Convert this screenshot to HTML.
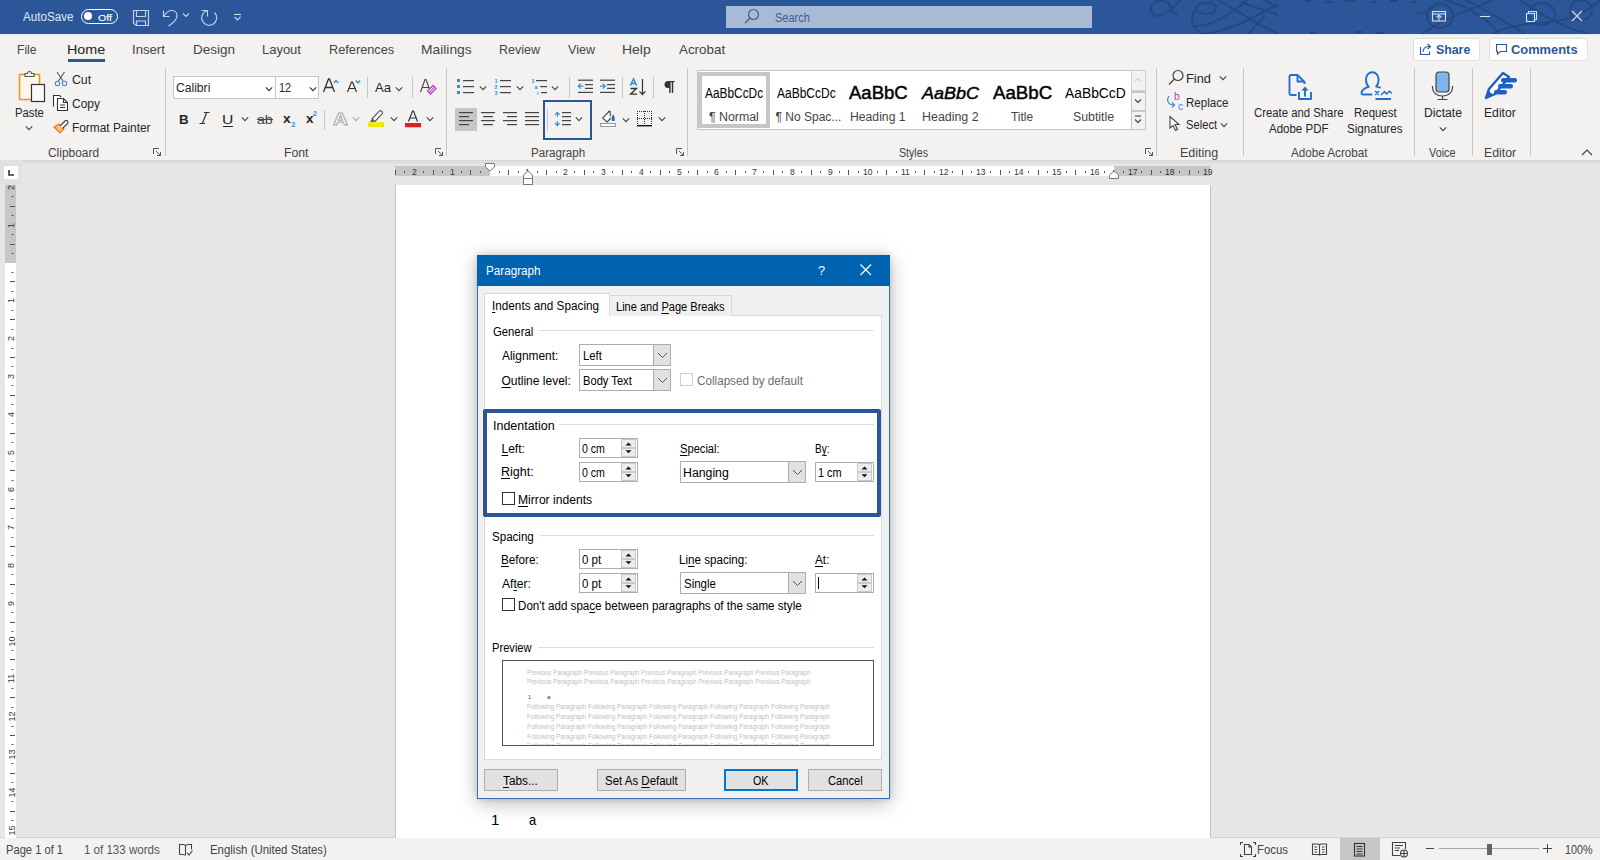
<!DOCTYPE html>
<html><head><meta charset="utf-8"><style>
html,body{margin:0;padding:0;width:1600px;height:860px;overflow:hidden;background:#e6e6e6;font-family:"Liberation Sans",sans-serif}
.r,.t,.s{position:absolute}
.t{white-space:nowrap;line-height:1;transform-origin:0 0}
u{text-decoration:underline;text-underline-offset:1.5px}
</style></head><body>
<div class="r" style="left:0px;top:0px;width:1600px;height:34px;background:#2b579a"></div>
<div class="r" style="left:0px;top:34px;width:1600px;height:126px;background:#f3f2f1"></div>
<div class="r" style="left:0px;top:160px;width:1600px;height:678px;background:#e6e6e6"></div>
<div class="r" style="left:0px;top:838px;width:1600px;height:22px;background:#f3f2f1"></div>
<div class="r" style="left:0px;top:837px;width:1600px;height:1px;background:#d4d4d4"></div>
<div class="r" style="left:0px;top:160px;width:1600px;height:1px;background:#d8d6d4"></div>
<div class="r" style="left:0px;top:161px;width:1600px;height:4px;background:linear-gradient(#dcdcdc,#e6e6e6)"></div>
<svg class="s" style="left:1140px;top:0px;" width="460" height="34" viewBox="0 0 460 34"><g fill="none" stroke="#24487f" stroke-width="2" opacity="0.9">
<path d="M40,0 C34,8 29,11 24,14 C17,18 11,15 11,9 C11,3 16,0.5 21,0.5 C27,0.5 31,4 31,9 C31,12 34,13 38,14"/>
<path d="M76,8 C76,4 71,3 67,3 C60,3 56,6 56,9 C56,12 61,14 67,14 C72,14 76,12 76,8 Z"/>
<path d="M56,9 C51,14 51,22 54,27 C57,31 62,34 66,34"/>
<path d="M55,26 C72,26 92,14 107,0"/>
<path d="M62,34 C90,32 118,15 138,4"/>
<path d="M78,0 C92,8 110,20 138,34"/>
<path d="M100,2 L138,15 M108,34 L125,16 M125,0 L137,8"/>
<path d="M165,1 h6 M185,2 h8 M205,1 h10 M230,2 h6 M250,1 h8 M270,2 h6"/>
<path d="M170,33 h6 M215,32 h8 M235,33 h10"/>
<ellipse cx="300" cy="16" rx="13" ry="12"/>
<path d="M275,13 C285,14 292,10 298,2"/>
<path d="M305,0 C330,6 350,22 360,34"/>
<path d="M325,0 C348,10 368,24 385,34"/>
<ellipse cx="402" cy="14" rx="13" ry="11"/>
<path d="M352,34 C380,20 410,25 430,18 C445,12 455,5 460,0"/>
<ellipse cx="441" cy="10" rx="11" ry="10"/>
<path d="M282,34 C300,20 330,10 352,0"/>
<path d="M380,0 C395,10 420,28 450,34"/>
</g></svg>
<div class="t" style="left:22.98px;top:11.42px;font-size:12.5px;color:#ffffff;transform:scaleX(0.9324);opacity:.85">AutoSave</div>
<div class="r" style="left:80.5px;top:8.5px;width:37px;height:15.5px;border:1.6px solid #fff;border-radius:8px;box-sizing:border-box"></div>
<div class="r" style="left:84px;top:12px;width:8px;height:8px;background:#fff;border-radius:50%"></div>
<div class="t" style="left:98.10px;top:12.66px;font-size:9.5px;color:#ffffff;transform:scaleX(1.1111);-webkit-text-stroke:0.15px #fff;">Off</div>
<svg class="s" style="left:132px;top:9px;" width="18" height="18" viewBox="0 0 18 18"><g fill="none" stroke="#c5d3ea" stroke-width="1.15">
<path d="M1.5,1.5 H16.5 V16.5 H4 L1.5,14 Z"/><path d="M4.5,1.5 V7.5 H13.5 V1.5"/><path d="M4.5,16.5 V12 H13.5 V16.5"/></g></svg>
<svg class="s" style="left:160px;top:8px;" width="20" height="20" viewBox="0 0 20 20"><g fill="none" stroke="#c5d3ea" stroke-width="1.15">
<path d="M3.5,2.5 V8.5 H9.5"/><path d="M4,8 C6,4.5 8.5,2.5 12,2.5 C15.5,2.5 17,5.5 17,8 C17,11 14,14.5 8.5,18"/></g></svg>
<svg class="s" style="left:182px;top:12px;" width="8" height="6" viewBox="0 0 8 6"><path d="M1,1.5 L4,4.5 L7,1.5" fill="none" stroke="#c5d3ea" stroke-width="1.1"/></svg>
<svg class="s" style="left:199px;top:8px;" width="20" height="20" viewBox="0 0 20 20"><g fill="none" stroke="#c5d3ea" stroke-width="1.15">
<path d="M8.5,2.5 A7.5,7.5 0 1 0 15.5,4.5"/><path d="M2.5,2.5 H8.5 V8.5"/></g></svg>
<svg class="s" style="left:232px;top:12px;" width="10" height="10" viewBox="0 0 10 10"><g fill="none" stroke="#c9d6ea" stroke-width="1.1"><path d="M2,2.5 H9"/><path d="M2.5,5 L5.5,8 L8.5,5"/></g></svg>
<div class="r" style="left:726px;top:6px;width:366px;height:22px;background:#a9bad5"></div>
<svg class="s" style="left:743px;top:8px;" width="18" height="18" viewBox="0 0 18 18"><g fill="none" stroke="#3b5d92" stroke-width="1.2"><circle cx="10.5" cy="6.5" r="5"/><path d="M7,10 L2,15"/></g></svg>
<div class="t" style="left:775.10px;top:11.64px;font-size:12px;color:#3b5d92;transform:scaleX(0.9183);">Search</div>
<svg class="s" style="left:1430px;top:9px;" width="18" height="14" viewBox="0 0 18 14"><g fill="none" stroke="#d5def0" stroke-width="1.1"><rect x="2.5" y="2.5" width="13" height="9.5"/><path d="M2.5,5 H15.5"/><path d="M9,11.5 V6.5 M6.5,8.5 L9,6 L11.5,8.5"/></g></svg>
<div class="r" style="left:1480px;top:16px;width:10px;height:1px;background:#d5def0"></div>
<svg class="s" style="left:1524px;top:10px;" width="14" height="14" viewBox="0 0 14 14"><g fill="none" stroke="#d5def0" stroke-width="1.1"><rect x="2.5" y="3.5" width="8" height="8"/><path d="M4.5,3.5 V1.5 H12.5 V9.5 H10.5"/></g></svg>
<svg class="s" style="left:1570px;top:9px;" width="14" height="14" viewBox="0 0 14 14"><g fill="none" stroke="#d5def0" stroke-width="1.1"><path d="M2,2 L12,12 M12,2 L2,12"/></g></svg>
<div class="r" style="left:0px;top:34px;width:1600px;height:1px;background:#e6ecf5"></div>
<div class="t" style="left:16.51px;top:42.99px;font-size:13px;color:#444444;transform:scaleX(0.9324);">File</div>
<div class="t" style="left:67.32px;top:42.99px;font-size:13px;color:#262626;transform:scaleX(1.1049);">Home</div>
<div class="t" style="left:132.09px;top:42.99px;font-size:13px;color:#444444;transform:scaleX(1.0090);">Insert</div>
<div class="t" style="left:192.90px;top:42.99px;font-size:13px;color:#444444;transform:scaleX(1.0348);">Design</div>
<div class="t" style="left:261.93px;top:42.99px;font-size:13px;color:#444444;">Layout</div>
<div class="t" style="left:328.96px;top:42.99px;font-size:13px;color:#444444;transform:scaleX(0.9793);">References</div>
<div class="t" style="left:420.87px;top:42.99px;font-size:13px;color:#444444;transform:scaleX(1.0618);">Mailings</div>
<div class="t" style="left:498.97px;top:42.99px;font-size:13px;color:#444444;transform:scaleX(0.9617);">Review</div>
<div class="t" style="left:567.94px;top:42.99px;font-size:13px;color:#444444;transform:scaleX(0.9671);">View</div>
<div class="t" style="left:621.85px;top:42.99px;font-size:13px;color:#444444;transform:scaleX(1.0746);">Help</div>
<div class="t" style="left:678.97px;top:42.99px;font-size:13px;color:#444444;transform:scaleX(1.0295);">Acrobat</div>
<div class="r" style="left:68px;top:59px;width:37px;height:3px;background:#2b579a"></div>
<div class="r" style="left:1412.5px;top:37.5px;width:67px;height:23px;background:#fff;border:1px solid #e1dfdd;border-radius:3px;box-sizing:border-box"></div>
<div class="r" style="left:1488.5px;top:37.5px;width:99px;height:23px;background:#fff;border:1px solid #e1dfdd;border-radius:3px;box-sizing:border-box"></div>
<svg class="s" style="left:1418px;top:42px;" width="15" height="14" viewBox="0 0 15 14"><g fill="none" stroke="#2b579a" stroke-width="1.1"><path d="M2.5,5 V12.5 H11.5 V9.5"/><path d="M5,10 C5,6 8,4.5 11.5,4.5"/><path d="M9.5,2 L12.5,4.5 L9.5,7"/></g></svg>
<div class="t" style="left:1435.89px;top:42.89px;font-size:13px;color:#2b579a;font-weight:700;transform:scaleX(0.9487);">Share</div>
<svg class="s" style="left:1495px;top:43px;" width="14" height="13" viewBox="0 0 14 13"><g fill="none" stroke="#2b579a" stroke-width="1.1"><path d="M1.5,1.5 H11.5 V8.5 H5.5 L2.5,11 V8.5 H1.5 Z"/></g></svg>
<div class="t" style="left:1511.47px;top:42.89px;font-size:13px;color:#2b579a;font-weight:700;transform:scaleX(0.9907);">Comments</div>
<svg class="s" style="left:16px;top:70px;" width="32" height="33" viewBox="0 0 32 33"><g>
<rect x="3.5" y="4.5" width="20" height="25" fill="#fdf6e9" stroke="#e39b2c" stroke-width="1.6"/>
<path d="M9,6.5 V3.5 H11.5 A2,2 0 0 1 15.5,3.5 H18 V6.5 Z" fill="#f3f2f1" stroke="#555" stroke-width="1.1"/>
<rect x="15.5" y="14.5" width="13" height="17" fill="#fafafa" stroke="#333" stroke-width="1.2"/>
</g></svg>
<div class="t" style="left:14.68px;top:107.22px;font-size:12.5px;color:#262626;transform:scaleX(0.9018);">Paste</div>
<svg class="s" style="left:23.5px;top:124px;" width="10" height="8" viewBox="0 0 10 8"><path d="M1.8,2.4 L5,5.6 L8.2,2.4" fill="none" stroke="#444" stroke-width="1.1"/></svg>
<svg class="s" style="left:54px;top:71px;" width="14" height="16" viewBox="0 0 14 16"><g fill="none" stroke-width="1.1">
<path d="M3,1 L9,10 M10.5,1 L4.5,10" stroke="#555"/>
<circle cx="3.5" cy="12.5" r="2.2" stroke="#2e8fd6"/><circle cx="10.5" cy="12.5" r="2.2" stroke="#2e8fd6"/></g></svg>
<div class="t" style="left:71.98px;top:74.22px;font-size:12.5px;color:#262626;transform:scaleX(0.9826);">Cut</div>
<svg class="s" style="left:52px;top:94px;" width="19" height="18" viewBox="0 0 19 18"><g fill="#fff" stroke="#333" stroke-width="1.1">
<path d="M1.5,12.5 V1.5 H7.5 L9,3"/>
<path d="M5.5,4.5 H11.5 L15.5,8.5 V16.5 H5.5 Z"/><path d="M11.5,4.5 V8.5 H15.5" fill="none"/>
<path d="M8,11 H13 M8,13.5 H13" fill="none"/></g></svg>
<div class="t" style="left:71.99px;top:98.02px;font-size:12.5px;color:#262626;transform:scaleX(0.9606);">Copy</div>
<svg class="s" style="left:52px;top:118px;" width="19" height="17" viewBox="0 0 19 17"><g>
<path d="M2,9 L8,15 L12,11 L7,6 Z" fill="#f6c36b" stroke="#e07b1a" stroke-width="1.2"/>
<path d="M8,8 L13,3 A1.6,1.6 0 0 1 15.5,5.5 L10.5,10.5" fill="#fff" stroke="#444" stroke-width="1.1"/>
</g></svg>
<div class="t" style="left:71.63px;top:121.82px;font-size:12.5px;color:#262626;transform:scaleX(0.9504);">Format Painter</div>
<div class="t" style="left:47.99px;top:146.64px;font-size:12px;color:#444444;transform:scaleX(0.9943);">Clipboard</div>
<svg class="s" style="left:152.5px;top:148.0px;" width="9" height="9" viewBox="0 0 9 9"><g fill="none" stroke="#555" stroke-width="1"><path d="M0.5,6 V0.5 H6"/><path d="M3,3 L7.5,7.5 M7.5,4 V7.5 H4"/></g></svg>
<div class="r" style="left:165px;top:68px;width:1px;height:88px;background:#c8c6c4"></div>
<div class="r" style="left:173px;top:76px;width:103px;height:23px;background:#fff;border:1px solid #c8c6c4;box-sizing:border-box"></div>
<div class="r" style="left:275px;top:76px;width:44px;height:23px;background:#fff;border:1px solid #c8c6c4;box-sizing:border-box"></div>
<div class="t" style="left:175.98px;top:82.02px;font-size:12.5px;color:#262626;transform:scaleX(0.9691);">Calibri</div>
<svg class="s" style="left:264.2px;top:84.5px;" width="10" height="8" viewBox="0 0 10 8"><path d="M1.8,2.4 L5,5.6 L8.2,2.4" fill="none" stroke="#333" stroke-width="1.1"/></svg>
<div class="t" style="left:279.07px;top:82.02px;font-size:12.5px;color:#262626;transform:scaleX(0.8683);">12</div>
<svg class="s" style="left:307.5px;top:84.5px;" width="10" height="8" viewBox="0 0 10 8"><path d="M1.8,2.4 L5,5.6 L8.2,2.4" fill="none" stroke="#333" stroke-width="1.1"/></svg>
<svg class="s" style="left:321px;top:77px;" width="40" height="17" viewBox="0 0 40 17"><path d="M2.5,15 L7.5,2 H8.5 L13.5,15 M4.5,10.5 H11.5" fill="none" stroke="#333" stroke-width="1.3"/>
<path d="M26.5,15 L30.5,5 H31.5 L35.5,15 M28,11.5 H34" fill="none" stroke="#333" stroke-width="1.2"/>
<path d="M12.8,6 L15,3.5 L17.2,6" fill="none" stroke="#2e8fd6" stroke-width="1.2"/>
<path d="M34.8,3.5 L37,6 L39.2,3.5" fill="none" stroke="#2e8fd6" stroke-width="1.2"/></svg>
<div class="r" style="left:367px;top:77px;width:1px;height:21px;background:#c8c6c4"></div>
<div class="t" style="left:375.47px;top:81.37px;font-size:13.5px;color:#262626;transform:scaleX(0.9705);">Aa</div>
<svg class="s" style="left:393.5px;top:84.5px;" width="10" height="8" viewBox="0 0 10 8"><path d="M1.8,2.4 L5,5.6 L8.2,2.4" fill="none" stroke="#444" stroke-width="1.1"/></svg>
<div class="r" style="left:412px;top:77px;width:1px;height:21px;background:#c8c6c4"></div>
<svg class="s" style="left:419px;top:78px;" width="19" height="17" viewBox="0 0 19 17"><g><path d="M1.5,14 L6,1.5 H7 L11.5,14 M3.3,9.5 H9.7" fill="none" stroke="#444" stroke-width="1.1"/>
<path d="M8.5,13 L14,7.5 L17,10.5 L11.5,16 Z" fill="#fff" stroke="#b146c2" stroke-width="1.3"/>
<path d="M10.2,14.7 L15.5,9.2" fill="none" stroke="#b146c2" stroke-width="1.1"/></g></svg>
<div class="t" style="left:179.21px;top:113.29px;font-size:13px;color:#262626;font-weight:700;transform:scaleX(1.0216);">B</div>
<svg class="s" style="left:198px;top:111px;" width="13" height="14" viewBox="0 0 13 14"><g fill="none" stroke="#333" stroke-width="1.2"><path d="M6,1.5 H11.5 M1.5,12.5 H7 M8.7,1.5 L4.3,12.5"/></g></svg>
<div class="t" style="left:221.69px;top:113.29px;font-size:13px;color:#262626;transform:scaleX(1.2055);">U</div>
<div class="r" style="left:222.5px;top:125.5px;width:10px;height:1px;background:#262626"></div>
<svg class="s" style="left:240.2px;top:115px;" width="10" height="8" viewBox="0 0 10 8"><path d="M1.8,2.4 L5,5.6 L8.2,2.4" fill="none" stroke="#444" stroke-width="1.1"/></svg>
<div class="t" style="left:256.90px;top:113.92px;font-size:12.5px;color:#444;transform:scaleX(1.1285);">ab</div>
<div class="r" style="left:256.5px;top:118.5px;width:16px;height:1px;background:#444"></div>
<div class="t" style="left:283.41px;top:112.49px;font-size:13px;color:#262626;font-weight:700;transform:scaleX(1.0644);">x</div>
<div class="t" style="left:291.24px;top:121.15px;font-size:7.5px;color:#2e8fd6;font-weight:700;">2</div>
<div class="t" style="left:305.61px;top:112.49px;font-size:13px;color:#262626;font-weight:700;transform:scaleX(1.0360);">x</div>
<div class="t" style="left:312.74px;top:109.65px;font-size:7.5px;color:#2e8fd6;font-weight:700;">2</div>
<div class="r" style="left:324px;top:110px;width:1px;height:20px;background:#c8c6c4"></div>
<div class="t" style="left:333.26px;top:111.11px;font-size:17px;color:#fff;transform:scaleX(1.2153);-webkit-text-stroke:1px #aaa;font-weight:700;">A</div>
<svg class="s" style="left:350.6px;top:115px;" width="10" height="8" viewBox="0 0 10 8"><path d="M1.8,2.4 L5,5.6 L8.2,2.4" fill="none" stroke="#aaa" stroke-width="1.1"/></svg>
<svg class="s" style="left:367px;top:109px;" width="19" height="19" viewBox="0 0 19 19"><path d="M5,10 L12,2.5 A1.7,1.7 0 0 1 15,5 L8,12.5 Z" fill="#fff" stroke="#555" stroke-width="1.1"/>
<path d="M5,10 L8,12.5 L5.5,13 L3,13 Z" fill="#555"/>
<rect x="1" y="13.2" width="16" height="4.8" fill="#f2e700"/></svg>
<svg class="s" style="left:388.5px;top:115px;" width="10" height="8" viewBox="0 0 10 8"><path d="M1.8,2.4 L5,5.6 L8.2,2.4" fill="none" stroke="#444" stroke-width="1.1"/></svg>
<svg class="s" style="left:404px;top:109px;" width="18" height="19" viewBox="0 0 18 19"><path d="M4.5,12.5 L8.5,2 H9.5 L13.5,12.5 M6,9 H12" fill="none" stroke="#333" stroke-width="1.2"/><rect x="1" y="14" width="16" height="4.3" fill="#e01f1f"/></svg>
<svg class="s" style="left:425.4px;top:115px;" width="10" height="8" viewBox="0 0 10 8"><path d="M1.8,2.4 L5,5.6 L8.2,2.4" fill="none" stroke="#444" stroke-width="1.1"/></svg>
<div class="t" style="left:284.00px;top:146.64px;font-size:12px;color:#444444;transform:scaleX(1.0201);">Font</div>
<svg class="s" style="left:434.5px;top:148.0px;" width="9" height="9" viewBox="0 0 9 9"><g fill="none" stroke="#555" stroke-width="1"><path d="M0.5,6 V0.5 H6"/><path d="M3,3 L7.5,7.5 M7.5,4 V7.5 H4"/></g></svg>
<div class="r" style="left:446px;top:68px;width:1px;height:88px;background:#c8c6c4"></div>
<svg class="s" style="left:456px;top:78px;" width="19" height="17" viewBox="0 0 19 17"><g><rect x="1" y="1" width="3" height="3" fill="#2e8fd6"/><rect x="1" y="7" width="3" height="3" fill="#2e8fd6"/><rect x="1" y="13" width="3" height="3" fill="#2e8fd6"/>
<rect x="7" y="2" width="11" height="1.2" fill="#444"/><rect x="7" y="8" width="11" height="1.2" fill="#444"/><rect x="7" y="14" width="11" height="1.2" fill="#444"/></g></svg>
<svg class="s" style="left:478px;top:83.5px;" width="10" height="8" viewBox="0 0 10 8"><path d="M1.8,2.4 L5,5.6 L8.2,2.4" fill="none" stroke="#444" stroke-width="1.1"/></svg>
<svg class="s" style="left:494px;top:78px;" width="19" height="17" viewBox="0 0 19 17"><g font-family="Liberation Sans" font-size="5.5" fill="#2e8fd6" font-weight="700"><text x="0.5" y="5">1</text><text x="0.5" y="11">2</text><text x="0.5" y="17">3</text></g>
<g fill="#444"><rect x="6" y="2" width="11" height="1.2"/><rect x="6" y="8" width="11" height="1.2"/><rect x="6" y="14" width="11" height="1.2"/></g></svg>
<svg class="s" style="left:515px;top:83.5px;" width="10" height="8" viewBox="0 0 10 8"><path d="M1.8,2.4 L5,5.6 L8.2,2.4" fill="none" stroke="#444" stroke-width="1.1"/></svg>
<svg class="s" style="left:531px;top:78px;" width="19" height="17" viewBox="0 0 19 17"><g font-family="Liberation Sans" font-size="5.5" fill="#2e8fd6" font-weight="700"><text x="0.5" y="5">1</text><text x="3.5" y="11">a</text><text x="6" y="17">i</text></g>
<g fill="#444"><rect x="5" y="2" width="11" height="1.2"/><rect x="9" y="8" width="7" height="1.2"/><rect x="10" y="14" width="6" height="1.2"/></g></svg>
<svg class="s" style="left:550px;top:83.5px;" width="10" height="8" viewBox="0 0 10 8"><path d="M1.8,2.4 L5,5.6 L8.2,2.4" fill="none" stroke="#444" stroke-width="1.1"/></svg>
<div class="r" style="left:569px;top:77px;width:1px;height:21px;background:#c8c6c4"></div>
<svg class="s" style="left:577px;top:78px;" width="18" height="17" viewBox="0 0 18 17"><g fill="#444"><rect x="1" y="1.6" width="15" height="1.2"/><rect x="8" y="6" width="8" height="1.2"/><rect x="8" y="9.8" width="8" height="1.2"/><rect x="1" y="13.8" width="15" height="1.2"/></g>
<path d="M6.5,8.2 H1.5 M3.8,5.7 L1.3,8.2 L3.8,10.7" fill="none" stroke="#2e8fd6" stroke-width="1.2"/></svg>
<svg class="s" style="left:599px;top:78px;" width="18" height="17" viewBox="0 0 18 17"><g fill="#444"><rect x="1" y="1.6" width="15" height="1.2"/><rect x="8" y="6" width="8" height="1.2"/><rect x="8" y="9.8" width="8" height="1.2"/><rect x="1" y="13.8" width="15" height="1.2"/></g>
<path d="M1,8.2 H6 M3.7,5.7 L6.2,8.2 L3.7,10.7" fill="none" stroke="#2e8fd6" stroke-width="1.2"/></svg>
<div class="r" style="left:622px;top:77px;width:1px;height:21px;background:#c8c6c4"></div>
<svg class="s" style="left:628px;top:77px;" width="20" height="20" viewBox="0 0 20 20"><path d="M2.3,8.7 L5.5,2 L8.7,8.7 M3.5,6.5 H7.5" fill="none" stroke="#2e8fd6" stroke-width="1.5"/>
<path d="M2.5,11.5 H8.5 L2.5,17.2 H9" fill="none" stroke="#333" stroke-width="1.3"/>
<path d="M14.5,2 V17.5 M11.5,14.3 L14.5,17.5 L17.5,14.3" fill="none" stroke="#333" stroke-width="1.2"/></svg>
<div class="r" style="left:653px;top:77px;width:1px;height:21px;background:#c8c6c4"></div>
<svg class="s" style="left:662px;top:80px;" width="14" height="14" viewBox="0 0 14 14"><path d="M6,1 H12.5 V2.3 H11.2 V13 H9.8 V2.3 H8.6 V13 H7.2 V8 H6 A3.5,3.5 0 0 1 6,1 Z" fill="#333"/></svg>
<div class="r" style="left:455px;top:108px;width:22px;height:23px;background:#c8c6c4"></div>
<svg class="s" style="left:459px;top:112px;" width="15" height="14" viewBox="0 0 15 14"><rect x="0" y="0" width="14" height="1.2" fill="#444"/><rect x="0" y="4" width="10" height="1.2" fill="#444"/><rect x="0" y="8" width="14" height="1.2" fill="#444"/><rect x="0" y="12" width="10" height="1.2" fill="#444"/></svg>
<svg class="s" style="left:481px;top:112px;" width="15" height="14" viewBox="0 0 15 14"><rect x="0" y="0" width="14" height="1.2" fill="#444"/><rect x="2" y="4" width="10" height="1.2" fill="#444"/><rect x="0" y="8" width="14" height="1.2" fill="#444"/><rect x="2" y="12" width="10" height="1.2" fill="#444"/></svg>
<svg class="s" style="left:503px;top:112px;" width="15" height="14" viewBox="0 0 15 14"><rect x="0" y="0" width="14" height="1.2" fill="#444"/><rect x="4" y="4" width="10" height="1.2" fill="#444"/><rect x="0" y="8" width="14" height="1.2" fill="#444"/><rect x="4" y="12" width="10" height="1.2" fill="#444"/></svg>
<svg class="s" style="left:525px;top:112px;" width="15" height="14" viewBox="0 0 15 14"><rect x="0" y="0" width="14" height="1.2" fill="#444"/><rect x="0" y="4" width="14" height="1.2" fill="#444"/><rect x="0" y="8" width="14" height="1.2" fill="#444"/><rect x="0" y="12" width="14" height="1.2" fill="#444"/></svg>
<div class="r" style="left:543px;top:100px;width:49px;height:39.5px;border:2px solid #2b579a;box-sizing:border-box"></div>
<div class="r" style="left:547px;top:109px;width:1px;height:22px;background:#c8c6c4"></div>
<svg class="s" style="left:552px;top:111px;" width="20" height="16" viewBox="0 0 20 16"><g fill="#444"><rect x="10" y="1" width="9" height="1.2"/><rect x="10" y="5" width="9" height="1.2"/><rect x="10" y="9" width="9" height="1.2"/><rect x="10" y="13" width="9" height="1.2"/></g>
<path d="M5.3,1.5 V6 M3,3.8 L5.3,1.3 L7.6,3.8 M5.3,10 V14.5 M3,12.2 L5.3,14.7 L7.6,12.2" fill="none" stroke="#2e8fd6" stroke-width="1.2"/></svg>
<svg class="s" style="left:573.5px;top:115px;" width="10" height="8" viewBox="0 0 10 8"><path d="M1.8,2.4 L5,5.6 L8.2,2.4" fill="none" stroke="#444" stroke-width="1.1"/></svg>
<svg class="s" style="left:599px;top:109px;" width="19" height="19" viewBox="0 0 19 19"><path d="M10.2,2.5 L3.7,8.8 L8,13 L12,9" fill="#fff" stroke="#444" stroke-width="1.1" stroke-linejoin="round"/>
<path d="M9.6,3 C10,1.8 11,1.8 11.2,3 V7.5" fill="none" stroke="#444" stroke-width="1.1"/>
<path d="M13,12 C12.6,9.5 12.8,6.5 14,5.5 C15.3,6 16,9 15.6,12 Z" fill="#1f6db5"/>
<rect x="1.5" y="14.5" width="15" height="3" fill="#fff" stroke="#999" stroke-width="1"/></svg>
<svg class="s" style="left:620.5px;top:115.5px;" width="10" height="8" viewBox="0 0 10 8"><path d="M1.8,2.4 L5,5.6 L8.2,2.4" fill="none" stroke="#444" stroke-width="1.1"/></svg>
<svg class="s" style="left:636px;top:111px;" width="17" height="16" viewBox="0 0 17 16"><g fill="#333"><rect x="1" y="0" width="1" height="1"/><rect x="1" y="7" width="1" height="1"/><rect x="3" y="0" width="1" height="1"/><rect x="3" y="7" width="1" height="1"/><rect x="5" y="0" width="1" height="1"/><rect x="5" y="7" width="1" height="1"/><rect x="7" y="0" width="1" height="1"/><rect x="7" y="7" width="1" height="1"/><rect x="9" y="0" width="1" height="1"/><rect x="9" y="7" width="1" height="1"/><rect x="11" y="0" width="1" height="1"/><rect x="11" y="7" width="1" height="1"/><rect x="13" y="0" width="1" height="1"/><rect x="13" y="7" width="1" height="1"/><rect x="15" y="0" width="1" height="1"/><rect x="15" y="7" width="1" height="1"/><rect x="1" y="0" width="1" height="1"/><rect x="15" y="0" width="1" height="1"/><rect x="8" y="0" width="1" height="1"/><rect x="1" y="2" width="1" height="1"/><rect x="15" y="2" width="1" height="1"/><rect x="8" y="2" width="1" height="1"/><rect x="1" y="4" width="1" height="1"/><rect x="15" y="4" width="1" height="1"/><rect x="8" y="4" width="1" height="1"/><rect x="1" y="6" width="1" height="1"/><rect x="15" y="6" width="1" height="1"/><rect x="8" y="6" width="1" height="1"/><rect x="1" y="8" width="1" height="1"/><rect x="15" y="8" width="1" height="1"/><rect x="8" y="8" width="1" height="1"/><rect x="1" y="10" width="1" height="1"/><rect x="15" y="10" width="1" height="1"/><rect x="8" y="10" width="1" height="1"/><rect x="1" y="12" width="1" height="1"/><rect x="15" y="12" width="1" height="1"/><rect x="8" y="12" width="1" height="1"/></g><rect x="1" y="14" width="15" height="1.4" fill="#111"/></svg>
<svg class="s" style="left:657px;top:115px;" width="10" height="8" viewBox="0 0 10 8"><path d="M1.8,2.4 L5,5.6 L8.2,2.4" fill="none" stroke="#444" stroke-width="1.1"/></svg>
<div class="t" style="left:531.05px;top:146.64px;font-size:12px;color:#444444;transform:scaleX(0.9654);">Paragraph</div>
<svg class="s" style="left:676px;top:148.0px;" width="9" height="9" viewBox="0 0 9 9"><g fill="none" stroke="#555" stroke-width="1"><path d="M0.5,6 V0.5 H6"/><path d="M3,3 L7.5,7.5 M7.5,4 V7.5 H4"/></g></svg>
<div class="r" style="left:687px;top:68px;width:1px;height:88px;background:#c8c6c4"></div>
<div class="r" style="left:697px;top:70px;width:449px;height:60px;background:#fff;border:1px solid #c8c6c4;box-sizing:border-box"></div>
<div class="r" style="left:698px;top:72px;width:72px;height:56px;border:4px solid #c8c6c4;box-sizing:border-box;background:#fff"></div>
<div class="t" style="left:704.78px;top:86.35px;font-size:14px;color:#000;transform:scaleX(0.8491);">AaBbCcDc</div>
<div class="t" style="left:709.02px;top:111.24px;font-size:12px;color:#444;transform:scaleX(1.0279);">&para; Normal</div>
<div class="t" style="left:776.68px;top:86.35px;font-size:14px;color:#000;transform:scaleX(0.8564);">AaBbCcDc</div>
<div class="t" style="left:775.53px;top:111.24px;font-size:12px;color:#444;">&para; No Spac...</div>
<div class="t" style="left:848.96px;top:84.16px;font-size:18px;color:#000;transform:scaleX(1.0299);-webkit-text-stroke:0.45px #000;">AaBbC</div>
<div class="t" style="left:850.00px;top:111.24px;font-size:12px;color:#444;transform:scaleX(1.0162);">Heading 1</div>
<div class="t" style="left:921.89px;top:85.01px;font-size:17px;color:#000;font-style:italic;transform:scaleX(1.0585);-webkit-text-stroke:0.45px #000;">AaBbC</div>
<div class="t" style="left:921.98px;top:111.24px;font-size:12px;color:#444;transform:scaleX(1.0353);">Heading 2</div>
<div class="t" style="left:992.56px;top:84.16px;font-size:18px;color:#000;transform:scaleX(1.0370);-webkit-text-stroke:0.45px #000;">AaBbC</div>
<div class="t" style="left:1011.48px;top:111.24px;font-size:12px;color:#444;transform:scaleX(0.9919);">Title</div>
<div class="t" style="left:1064.97px;top:86.35px;font-size:14px;color:#000;transform:scaleX(0.9873);">AaBbCcD</div>
<div class="t" style="left:1073.44px;top:111.24px;font-size:12px;color:#444;transform:scaleX(1.0270);">Subtitle</div>
<div class="r" style="left:1131px;top:70px;width:15px;height:21px;background:#f3f2f1;border:1px solid #d2d0ce;box-sizing:border-box"></div>
<div class="r" style="left:1131px;top:91px;width:15px;height:20px;background:#f3f2f1;border:1px solid #c8c6c4;border-top:2px solid #c8c6c4;box-sizing:border-box"></div>
<div class="r" style="left:1131px;top:110px;width:15px;height:20px;background:#f3f2f1;border:1px solid #c8c6c4;border-top:2px solid #c8c6c4;box-sizing:border-box"></div>
<svg class="s" style="left:1133px;top:76px;" width="10" height="8" viewBox="0 0 10 8"><path d="M2,5.5 L5,2.5 L8,5.5" fill="none" stroke="#bbb" stroke-width="1"/></svg>
<svg class="s" style="left:1133px;top:97px;" width="10" height="8" viewBox="0 0 10 8"><path d="M2,2.5 L5,5.5 L8,2.5" fill="none" stroke="#444" stroke-width="1.1"/></svg>
<svg class="s" style="left:1133px;top:114px;" width="10" height="12" viewBox="0 0 10 12"><g fill="none" stroke="#444" stroke-width="1.1"><path d="M2,2 H8"/><path d="M2,5.5 L5,8.5 L8,5.5"/></g></svg>
<div class="t" style="left:898.92px;top:146.64px;font-size:12px;color:#444444;transform:scaleX(0.8864);">Styles</div>
<svg class="s" style="left:1144.5px;top:148.0px;" width="9" height="9" viewBox="0 0 9 9"><g fill="none" stroke="#555" stroke-width="1"><path d="M0.5,6 V0.5 H6"/><path d="M3,3 L7.5,7.5 M7.5,4 V7.5 H4"/></g></svg>
<div class="r" style="left:1156px;top:68px;width:1px;height:88px;background:#c8c6c4"></div>
<svg class="s" style="left:1167px;top:69px;" width="18" height="17" viewBox="0 0 18 17"><g fill="none" stroke="#444" stroke-width="1.2"><circle cx="11" cy="6.5" r="5"/><path d="M7.5,10 L2,15.5"/></g></svg>
<div class="t" style="left:1185.95px;top:73.42px;font-size:12.5px;color:#262626;transform:scaleX(1.0228);">Find</div>
<svg class="s" style="left:1218px;top:74px;" width="10" height="8" viewBox="0 0 10 8"><path d="M1.8,2.4 L5,5.6 L8.2,2.4" fill="none" stroke="#444" stroke-width="1.1"/></svg>
<svg class="s" style="left:1166px;top:91px;" width="20" height="20" viewBox="0 0 20 20"><text x="8" y="9" font-family="Liberation Sans" font-size="10.5" fill="#b146c2">b</text><text x="12" y="19" font-family="Liberation Sans" font-size="10.5" fill="#2e8fd6">c</text>
<path d="M3,5 C0,9 2,14 8,14 M6,11.5 L8.5,14 L6,16.5" fill="none" stroke="#2e8fd6" stroke-width="1.1"/></svg>
<div class="t" style="left:1186.05px;top:96.72px;font-size:12.5px;color:#262626;transform:scaleX(0.9259);">Replace</div>
<svg class="s" style="left:1168px;top:115px;" width="14" height="17" viewBox="0 0 14 17"><path d="M2,1.5 L2,13 L5,10.5 L7.5,15.5 L9.5,14.5 L7,9.5 L11,9.5 Z" fill="#fff" stroke="#444" stroke-width="1.1"/></svg>
<div class="t" style="left:1186.49px;top:119.42px;font-size:12.5px;color:#262626;transform:scaleX(0.8949);">Select</div>
<svg class="s" style="left:1218.5px;top:120.5px;" width="10" height="8" viewBox="0 0 10 8"><path d="M1.8,2.4 L5,5.6 L8.2,2.4" fill="none" stroke="#444" stroke-width="1.1"/></svg>
<div class="t" style="left:1180.38px;top:146.64px;font-size:12px;color:#444444;transform:scaleX(1.0391);">Editing</div>
<div class="r" style="left:1243px;top:68px;width:1px;height:88px;background:#c8c6c4"></div>
<svg class="s" style="left:1287px;top:73px;" width="27" height="29" viewBox="0 0 27 29"><g fill="none" stroke="#1f6fd0" stroke-width="1.9" stroke-linejoin="round">
<path d="M9.5,22 H4 C3,22 2.5,21.5 2.5,20.5 V3.5 C2.5,2.5 3,2 4,2 H10.5 L17.5,9 V11"/><path d="M10.5,2.5 V8.5 H17"/>
<path d="M12,19 V26 H24 V19"/><path d="M18,23.5 V15"/></g><path d="M14.5,17.5 L18,13.5 L21.5,17.5 Z" fill="#1f6fd0"/></svg>
<div class="t" style="left:1254.02px;top:107.32px;font-size:12.5px;color:#262626;transform:scaleX(0.9068);">Create and Share</div>
<div class="t" style="left:1269.48px;top:123.02px;font-size:12.5px;color:#262626;transform:scaleX(0.9205);">Adobe PDF</div>
<svg class="s" style="left:1358px;top:71px;" width="36" height="30" viewBox="0 0 36 30"><g fill="none" stroke="#1f6fd0" stroke-width="1.9" stroke-linecap="round">
<path d="M13.5,23.5 H5 C3.5,23.5 3,22 4,20 C5.5,17.5 8,16.5 10.5,15.8 C8.8,14 8,11.5 8,8.5 C8,4.2 10.6,1.3 14.3,1.3 C18,1.3 20.6,4.5 20.6,8.5 C20.6,11.5 19.8,13.8 18.3,15.5 C19.5,16.2 20.5,16.5 22,16.5"/>
<path d="M17.5,20.5 L20.5,23.5 M20.5,20.5 L17.5,23.5" stroke-width="1.5"/>
<path d="M23.5,23.5 L26.5,20.5 L28.5,23 L31.5,20.2 L33.5,22" stroke-width="1.5"/>
<path d="M17.5,28 H33" stroke-width="2" stroke-linecap="butt"/></g></svg>
<div class="t" style="left:1354.26px;top:107.32px;font-size:12.5px;color:#262626;transform:scaleX(0.9155);">Request</div>
<div class="t" style="left:1347.47px;top:123.02px;font-size:12.5px;color:#262626;transform:scaleX(0.9278);">Signatures</div>
<div class="r" style="left:1413.5px;top:68px;width:1px;height:88px;background:#c8c6c4"></div>
<svg class="s" style="left:1430px;top:71px;" width="25" height="30" viewBox="0 0 25 30"><rect x="6" y="1" width="13" height="20" rx="3" fill="#7db6ec" stroke="#444" stroke-width="1.2"/>
<path d="M2.5,15 V17 A10,8 0 0 0 22.5,17 V15" fill="none" stroke="#444" stroke-width="1.2"/>
<path d="M12.5,25 V28.5 M7.5,28.5 H17.5" fill="none" stroke="#444" stroke-width="1.2"/></svg>
<div class="t" style="left:1423.50px;top:107.32px;font-size:12.5px;color:#262626;transform:scaleX(0.9779);">Dictate</div>
<svg class="s" style="left:1437.5px;top:124.6px;" width="10" height="8" viewBox="0 0 10 8"><path d="M1.8,2.4 L5,5.6 L8.2,2.4" fill="none" stroke="#444" stroke-width="1.1"/></svg>
<div class="t" style="left:1428.95px;top:146.64px;font-size:12px;color:#444444;transform:scaleX(0.9037);">Voice</div>
<div class="r" style="left:1471.5px;top:68px;width:1px;height:88px;background:#c8c6c4"></div>
<svg class="s" style="left:1484px;top:70px;" width="35" height="32" viewBox="0 0 35 32"><g>
<path d="M2,28 L5,19 L19,3 L25,7 L11,24 Z" fill="#fff" stroke="#1f5fc4" stroke-width="2.4" stroke-linejoin="round"/>
<path d="M2,28 L5,21 L9,25 Z" fill="#1f5fc4"/>
<rect x="17" y="8" width="16" height="4.5" rx="2.2" fill="#1f5fc4"/>
<rect x="14" y="14" width="15" height="4.5" rx="2.2" fill="#1f5fc4"/>
<rect x="10" y="20" width="13" height="4.5" rx="2.2" fill="#1f5fc4"/></g></svg>
<div class="t" style="left:1484.00px;top:107.32px;font-size:12.5px;color:#262626;transform:scaleX(0.9738);">Editor</div>
<div class="t" style="left:1483.99px;top:146.64px;font-size:12px;color:#444444;transform:scaleX(1.0277);">Editor</div>
<div class="r" style="left:1529.5px;top:68px;width:1px;height:88px;background:#c8c6c4"></div>
<svg class="s" style="left:1580px;top:148px;" width="14" height="9" viewBox="0 0 14 9"><path d="M2,7 L7,2 L12,7" fill="none" stroke="#444" stroke-width="1.2"/></svg>
<div class="t" style="left:1290.58px;top:146.64px;font-size:12px;color:#444444;transform:scaleX(0.9718);">Adobe Acrobat</div>
<div class="r" style="left:396px;top:185px;width:814px;height:653px;background:#fff"></div>
<div class="r" style="left:395px;top:185px;width:1px;height:653px;background:#c4c4c4"></div>
<div class="r" style="left:1210px;top:185px;width:1px;height:653px;background:#c4c4c4"></div>
<div class="r" style="left:394.5px;top:166px;width:95.5px;height:10px;background:#c6c6c6"></div>
<div class="r" style="left:490px;top:166px;width:624px;height:10px;background:#fff"></div>
<div class="r" style="left:1114px;top:166px;width:96px;height:10px;background:#c6c6c6"></div>
<svg class="s" style="left:0px;top:166px;" width="1600" height="10" viewBox="0 0 1600 10"><rect x="395" y="4" width="1" height="5" fill="#555"/><rect x="404" y="5" width="1" height="2" fill="#555"/><rect x="423" y="5" width="1" height="2" fill="#555"/><rect x="433" y="4" width="1" height="5" fill="#555"/><rect x="442" y="5" width="1" height="2" fill="#555"/><rect x="461" y="5" width="1" height="2" fill="#555"/><rect x="470" y="4" width="1" height="5" fill="#555"/><rect x="480" y="5" width="1" height="2" fill="#555"/><rect x="499" y="5" width="1" height="2" fill="#555"/><rect x="508" y="4" width="1" height="5" fill="#555"/><rect x="518" y="5" width="1" height="2" fill="#555"/><rect x="537" y="5" width="1" height="2" fill="#555"/><rect x="546" y="4" width="1" height="5" fill="#555"/><rect x="556" y="5" width="1" height="2" fill="#555"/><rect x="574" y="5" width="1" height="2" fill="#555"/><rect x="584" y="4" width="1" height="5" fill="#555"/><rect x="593" y="5" width="1" height="2" fill="#555"/><rect x="612" y="5" width="1" height="2" fill="#555"/><rect x="622" y="4" width="1" height="5" fill="#555"/><rect x="631" y="5" width="1" height="2" fill="#555"/><rect x="650" y="5" width="1" height="2" fill="#555"/><rect x="660" y="4" width="1" height="5" fill="#555"/><rect x="669" y="5" width="1" height="2" fill="#555"/><rect x="688" y="5" width="1" height="2" fill="#555"/><rect x="697" y="4" width="1" height="5" fill="#555"/><rect x="707" y="5" width="1" height="2" fill="#555"/><rect x="726" y="5" width="1" height="2" fill="#555"/><rect x="735" y="4" width="1" height="5" fill="#555"/><rect x="745" y="5" width="1" height="2" fill="#555"/><rect x="763" y="5" width="1" height="2" fill="#555"/><rect x="773" y="4" width="1" height="5" fill="#555"/><rect x="782" y="5" width="1" height="2" fill="#555"/><rect x="801" y="5" width="1" height="2" fill="#555"/><rect x="811" y="4" width="1" height="5" fill="#555"/><rect x="820" y="5" width="1" height="2" fill="#555"/><rect x="839" y="5" width="1" height="2" fill="#555"/><rect x="848" y="4" width="1" height="5" fill="#555"/><rect x="858" y="5" width="1" height="2" fill="#555"/><rect x="877" y="5" width="1" height="2" fill="#555"/><rect x="886" y="4" width="1" height="5" fill="#555"/><rect x="896" y="5" width="1" height="2" fill="#555"/><rect x="915" y="5" width="1" height="2" fill="#555"/><rect x="924" y="4" width="1" height="5" fill="#555"/><rect x="934" y="5" width="1" height="2" fill="#555"/><rect x="952" y="5" width="1" height="2" fill="#555"/><rect x="962" y="4" width="1" height="5" fill="#555"/><rect x="971" y="5" width="1" height="2" fill="#555"/><rect x="990" y="5" width="1" height="2" fill="#555"/><rect x="1000" y="4" width="1" height="5" fill="#555"/><rect x="1009" y="5" width="1" height="2" fill="#555"/><rect x="1028" y="5" width="1" height="2" fill="#555"/><rect x="1038" y="4" width="1" height="5" fill="#555"/><rect x="1047" y="5" width="1" height="2" fill="#555"/><rect x="1066" y="5" width="1" height="2" fill="#555"/><rect x="1075" y="4" width="1" height="5" fill="#555"/><rect x="1085" y="5" width="1" height="2" fill="#555"/><rect x="1104" y="5" width="1" height="2" fill="#555"/><rect x="1113" y="4" width="1" height="5" fill="#555"/><rect x="1123" y="5" width="1" height="2" fill="#555"/><rect x="1141" y="5" width="1" height="2" fill="#555"/><rect x="1151" y="4" width="1" height="5" fill="#555"/><rect x="1160" y="5" width="1" height="2" fill="#555"/><rect x="1179" y="5" width="1" height="2" fill="#555"/><rect x="1189" y="4" width="1" height="5" fill="#555"/><rect x="1198" y="5" width="1" height="2" fill="#555"/></svg>
<div class="t" style="left:411.92px;top:168.18px;font-size:9px;color:#333;transform:scaleX(0.9500);">2</div>
<div class="t" style="left:449.61px;top:168.18px;font-size:9px;color:#333;transform:scaleX(0.9500);">1</div>
<div class="t" style="left:525.21px;top:168.18px;font-size:9px;color:#333;transform:scaleX(0.9500);">1</div>
<div class="t" style="left:563.12px;top:168.18px;font-size:9px;color:#333;transform:scaleX(0.9500);">2</div>
<div class="t" style="left:600.95px;top:168.18px;font-size:9px;color:#333;transform:scaleX(0.9500);">3</div>
<div class="t" style="left:638.75px;top:168.18px;font-size:9px;color:#333;transform:scaleX(0.9500);">4</div>
<div class="t" style="left:676.53px;top:168.18px;font-size:9px;color:#333;transform:scaleX(0.9500);">5</div>
<div class="t" style="left:714.29px;top:168.18px;font-size:9px;color:#333;transform:scaleX(0.9500);">6</div>
<div class="t" style="left:752.12px;top:168.18px;font-size:9px;color:#333;transform:scaleX(0.9500);">7</div>
<div class="t" style="left:789.92px;top:168.18px;font-size:9px;color:#333;transform:scaleX(0.9500);">8</div>
<div class="t" style="left:827.72px;top:168.18px;font-size:9px;color:#333;transform:scaleX(0.9500);">9</div>
<div class="t" style="left:862.99px;top:168.18px;font-size:9px;color:#333;transform:scaleX(0.9500);">10</div>
<div class="t" style="left:901.15px;top:168.18px;font-size:9px;color:#333;transform:scaleX(0.9500);">11</div>
<div class="t" style="left:938.63px;top:168.18px;font-size:9px;color:#333;transform:scaleX(0.9500);">12</div>
<div class="t" style="left:976.41px;top:168.18px;font-size:9px;color:#333;transform:scaleX(0.9500);">13</div>
<div class="t" style="left:1014.14px;top:168.18px;font-size:9px;color:#333;transform:scaleX(0.9500);">14</div>
<div class="t" style="left:1052.00px;top:168.18px;font-size:9px;color:#333;transform:scaleX(0.9500);">15</div>
<div class="t" style="left:1089.81px;top:168.18px;font-size:9px;color:#333;transform:scaleX(0.9500);">16</div>
<div class="t" style="left:1127.63px;top:168.18px;font-size:9px;color:#333;transform:scaleX(0.9500);">17</div>
<div class="t" style="left:1165.40px;top:168.18px;font-size:9px;color:#333;transform:scaleX(0.9500);">18</div>
<div class="t" style="left:1203.22px;top:168.18px;font-size:9px;color:#333;transform:scaleX(0.9500);">19</div>
<svg class="s" style="left:484px;top:162px;" width="13" height="10" viewBox="0 0 13 10"><path d="M1.5,1.5 H10.5 V5 L6,9 L1.5,5 Z" fill="#fff" stroke="#777" stroke-width="1"/></svg>
<svg class="s" style="left:521.5px;top:170px;" width="13" height="16" viewBox="0 0 13 16"><path d="M1.5,8.5 V5 L6,1 L10.5,5 V8.5 Z" fill="#fff" stroke="#777" stroke-width="1"/><rect x="1.5" y="8.5" width="9" height="6" fill="#fff" stroke="#777" stroke-width="1"/></svg>
<svg class="s" style="left:1107.5px;top:170px;" width="13" height="10" viewBox="0 0 13 10"><path d="M1.5,8.5 V5 L6,1 L10.5,5 V8.5 Z" fill="#fff" stroke="#777" stroke-width="1"/></svg>
<div class="r" style="left:0px;top:160px;width:22px;height:25px;background:#e1e1e1"></div>
<div class="r" style="left:4px;top:166px;width:14px;height:13px;background:#fff"></div>
<svg class="s" style="left:6px;top:168px;" width="10" height="10" viewBox="0 0 10 10"><path d="M3,2 V7 H8" fill="none" stroke="#333" stroke-width="1.6"/></svg>
<div class="r" style="left:5px;top:185px;width:10.5px;height:78px;background:#c6c6c6"></div>
<div class="r" style="left:5px;top:263px;width:10.5px;height:575px;background:#fff"></div>
<svg class="s" style="left:5px;top:185px;" width="11" height="653" viewBox="0 0 11 653"><rect x="6.5" y="11" width="2" height="1" fill="#555"/><rect x="5" y="21" width="5" height="1" fill="#555"/><rect x="6.5" y="30" width="2" height="1" fill="#555"/><rect x="6.5" y="49" width="2" height="1" fill="#555"/><rect x="5" y="59" width="5" height="1" fill="#555"/><rect x="6.5" y="68" width="2" height="1" fill="#555"/><rect x="6.5" y="87" width="2" height="1" fill="#555"/><rect x="5" y="96" width="5" height="1" fill="#555"/><rect x="6.5" y="106" width="2" height="1" fill="#555"/><rect x="6.5" y="125" width="2" height="1" fill="#555"/><rect x="5" y="134" width="5" height="1" fill="#555"/><rect x="6.5" y="144" width="2" height="1" fill="#555"/><rect x="6.5" y="163" width="2" height="1" fill="#555"/><rect x="5" y="172" width="5" height="1" fill="#555"/><rect x="6.5" y="181" width="2" height="1" fill="#555"/><rect x="6.5" y="200" width="2" height="1" fill="#555"/><rect x="5" y="210" width="5" height="1" fill="#555"/><rect x="6.5" y="219" width="2" height="1" fill="#555"/><rect x="6.5" y="238" width="2" height="1" fill="#555"/><rect x="5" y="248" width="5" height="1" fill="#555"/><rect x="6.5" y="257" width="2" height="1" fill="#555"/><rect x="6.5" y="276" width="2" height="1" fill="#555"/><rect x="5" y="285" width="5" height="1" fill="#555"/><rect x="6.5" y="295" width="2" height="1" fill="#555"/><rect x="6.5" y="314" width="2" height="1" fill="#555"/><rect x="5" y="323" width="5" height="1" fill="#555"/><rect x="6.5" y="333" width="2" height="1" fill="#555"/><rect x="6.5" y="352" width="2" height="1" fill="#555"/><rect x="5" y="361" width="5" height="1" fill="#555"/><rect x="6.5" y="370" width="2" height="1" fill="#555"/><rect x="6.5" y="389" width="2" height="1" fill="#555"/><rect x="5" y="399" width="5" height="1" fill="#555"/><rect x="6.5" y="408" width="2" height="1" fill="#555"/><rect x="6.5" y="427" width="2" height="1" fill="#555"/><rect x="5" y="437" width="5" height="1" fill="#555"/><rect x="6.5" y="446" width="2" height="1" fill="#555"/><rect x="6.5" y="465" width="2" height="1" fill="#555"/><rect x="5" y="474" width="5" height="1" fill="#555"/><rect x="6.5" y="484" width="2" height="1" fill="#555"/><rect x="6.5" y="503" width="2" height="1" fill="#555"/><rect x="5" y="512" width="5" height="1" fill="#555"/><rect x="6.5" y="522" width="2" height="1" fill="#555"/><rect x="6.5" y="541" width="2" height="1" fill="#555"/><rect x="5" y="550" width="5" height="1" fill="#555"/><rect x="6.5" y="559" width="2" height="1" fill="#555"/><rect x="6.5" y="578" width="2" height="1" fill="#555"/><rect x="5" y="588" width="5" height="1" fill="#555"/><rect x="6.5" y="597" width="2" height="1" fill="#555"/><rect x="6.5" y="616" width="2" height="1" fill="#555"/><rect x="5" y="626" width="5" height="1" fill="#555"/><rect x="6.5" y="635" width="2" height="1" fill="#555"/></svg>
<div class="t" style="left:9.30px;top:182.90px;font-size:9px;width:5.01px;height:9px;line-height:9px;color:#333;transform:rotate(-90deg);transform-origin:50% 50%">2</div>
<div class="t" style="left:9.30px;top:220.70px;font-size:9px;width:5.01px;height:9px;line-height:9px;color:#333;transform:rotate(-90deg);transform-origin:50% 50%">1</div>
<div class="t" style="left:9.30px;top:296.30px;font-size:9px;width:5.01px;height:9px;line-height:9px;color:#333;transform:rotate(-90deg);transform-origin:50% 50%">1</div>
<div class="t" style="left:9.30px;top:334.10px;font-size:9px;width:5.01px;height:9px;line-height:9px;color:#333;transform:rotate(-90deg);transform-origin:50% 50%">2</div>
<div class="t" style="left:9.30px;top:371.90px;font-size:9px;width:5.01px;height:9px;line-height:9px;color:#333;transform:rotate(-90deg);transform-origin:50% 50%">3</div>
<div class="t" style="left:9.30px;top:409.70px;font-size:9px;width:5.01px;height:9px;line-height:9px;color:#333;transform:rotate(-90deg);transform-origin:50% 50%">4</div>
<div class="t" style="left:9.30px;top:447.50px;font-size:9px;width:5.01px;height:9px;line-height:9px;color:#333;transform:rotate(-90deg);transform-origin:50% 50%">5</div>
<div class="t" style="left:9.30px;top:485.30px;font-size:9px;width:5.01px;height:9px;line-height:9px;color:#333;transform:rotate(-90deg);transform-origin:50% 50%">6</div>
<div class="t" style="left:9.30px;top:523.10px;font-size:9px;width:5.01px;height:9px;line-height:9px;color:#333;transform:rotate(-90deg);transform-origin:50% 50%">7</div>
<div class="t" style="left:9.30px;top:560.90px;font-size:9px;width:5.01px;height:9px;line-height:9px;color:#333;transform:rotate(-90deg);transform-origin:50% 50%">8</div>
<div class="t" style="left:9.30px;top:598.70px;font-size:9px;width:5.01px;height:9px;line-height:9px;color:#333;transform:rotate(-90deg);transform-origin:50% 50%">9</div>
<div class="t" style="left:6.79px;top:636.50px;font-size:9px;width:10.01px;height:9px;line-height:9px;color:#333;transform:rotate(-90deg);transform-origin:50% 50%">10</div>
<div class="t" style="left:7.13px;top:674.30px;font-size:9px;width:9.34px;height:9px;line-height:9px;color:#333;transform:rotate(-90deg);transform-origin:50% 50%">11</div>
<div class="t" style="left:6.79px;top:712.10px;font-size:9px;width:10.01px;height:9px;line-height:9px;color:#333;transform:rotate(-90deg);transform-origin:50% 50%">12</div>
<div class="t" style="left:6.79px;top:749.90px;font-size:9px;width:10.01px;height:9px;line-height:9px;color:#333;transform:rotate(-90deg);transform-origin:50% 50%">13</div>
<div class="t" style="left:6.79px;top:787.70px;font-size:9px;width:10.01px;height:9px;line-height:9px;color:#333;transform:rotate(-90deg);transform-origin:50% 50%">14</div>
<div class="t" style="left:6.79px;top:825.50px;font-size:9px;width:10.01px;height:9px;line-height:9px;color:#333;transform:rotate(-90deg);transform-origin:50% 50%">15</div>
<div class="t" style="left:490.65px;top:812.72px;font-size:14.5px;color:#000;transform:scaleX(1.0397);">1</div>
<div class="t" style="left:528.65px;top:812.72px;font-size:14.5px;color:#000;transform:scaleX(0.8861);">a</div>
<div class="r" style="left:477px;top:255px;width:413px;height:544px;background:#f0f0f0;box-shadow:0 4px 18px rgba(0,0,0,0.28),0 0 6px rgba(0,0,0,0.12);border:1px solid #3a6ea8;box-sizing:border-box"></div>
<div class="r" style="left:477px;top:255px;width:413px;height:31px;background:#0063b1"></div>
<div class="t" style="left:485.54px;top:265.12px;font-size:12.5px;color:#ffffff;transform:scaleX(0.9356);">Paragraph</div>
<div class="t" style="left:817.88px;top:263.97px;font-size:13.5px;color:#ffffff;transform:scaleX(0.9452);">?</div>
<svg class="s" style="left:859px;top:263px;" width="14" height="14" viewBox="0 0 14 14"><path d="M1.5,1.5 L12,12 M12,1.5 L1.5,12" fill="none" stroke="#fff" stroke-width="1.2"/></svg>
<div class="r" style="left:484px;top:314.5px;width:397.5px;height:445px;background:#fff;border:1px solid #d9d9d9;box-sizing:border-box"></div>
<div class="r" style="left:609px;top:295px;width:123px;height:20.5px;background:#f0f0f0;border:1px solid #d9d9d9;border-bottom:none;box-sizing:border-box"></div>
<div class="r" style="left:484px;top:293px;width:125.5px;height:23px;background:#fff;border:1px solid #d9d9d9;border-bottom:none;box-sizing:border-box"></div>
<div class="t" style="left:492.42px;top:299.84px;font-size:12px;color:#000000;transform:scaleX(0.9782);"><u>I</u>ndents and Spacing</div>
<div class="t" style="left:615.59px;top:300.84px;font-size:12px;color:#000000;transform:scaleX(0.9197);">Line and <u>P</u>age Breaks</div>
<div class="t" style="left:493.03px;top:325.64px;font-size:12px;color:#000000;transform:scaleX(0.9422);">General</div>
<div class="r" style="left:538.2px;top:330px;width:335.5999999999999px;height:1px;background:#dcdcdc"></div>
<div class="t" style="left:502.23px;top:349.84px;font-size:12px;color:#000000;transform:scaleX(0.9941);">Ali<u>g</u>nment:</div>
<div class="r" style="left:579px;top:344px;width:92px;height:22px;background:#fff;border:1px solid #adadad;box-sizing:border-box"></div>
<div class="r" style="left:653px;top:344px;width:18px;height:22px;background:#e1e1e1;border:1px solid #adadad;box-sizing:border-box"></div>
<svg class="s" style="left:657px;top:351.0px;" width="11" height="8" viewBox="0 0 11 8"><path d="M1,2 L5.5,6.5 L10,2" fill="none" stroke="#555" stroke-width="1"/></svg>
<div class="t" style="left:582.58px;top:349.84px;font-size:12px;color:#000000;transform:scaleX(0.9370);">Left</div>
<div class="t" style="left:501.43px;top:374.84px;font-size:12px;color:#000000;"><u>O</u>utline level:</div>
<div class="r" style="left:579px;top:369px;width:92px;height:22px;background:#fff;border:1px solid #adadad;box-sizing:border-box"></div>
<div class="r" style="left:653px;top:369px;width:18px;height:22px;background:#e1e1e1;border:1px solid #adadad;box-sizing:border-box"></div>
<svg class="s" style="left:657px;top:376.0px;" width="11" height="8" viewBox="0 0 11 8"><path d="M1,2 L5.5,6.5 L10,2" fill="none" stroke="#555" stroke-width="1"/></svg>
<div class="t" style="left:582.59px;top:374.84px;font-size:12px;color:#000000;transform:scaleX(0.9289);">Body Text</div>
<div class="r" style="left:680px;top:373px;width:13px;height:13px;background:#fff;border:1px solid #cccccc;box-sizing:border-box"></div>
<div class="t" style="left:696.91px;top:374.84px;font-size:12px;color:#6d6d6d;transform:scaleX(0.9737);">Collapsed by default</div>
<div class="t" style="left:492.65px;top:419.59px;font-size:12px;color:#000000;transform:scaleX(1.0383);">Indentation</div>
<div class="r" style="left:559.2px;top:424px;width:314.5999999999999px;height:1px;background:#dcdcdc"></div>
<div class="t" style="left:501.51px;top:442.64px;font-size:12px;color:#000000;"><u>L</u>eft:</div>
<div class="r" style="left:579px;top:438px;width:59px;height:20px;background:#fff;border:1px solid #adadad;box-sizing:border-box"></div>
<div class="r" style="left:621px;top:439px;width:15px;height:9.0px;background:#ececec;border:1px solid #c9c9c9;box-sizing:border-box"></div>
<div class="r" style="left:621px;top:448.0px;width:15px;height:9.0px;background:#ececec;border:1px solid #c9c9c9;box-sizing:border-box"></div>
<svg class="s" style="left:621px;top:439px;" width="15" height="18" viewBox="0 0 15 18"><path d="M4.5,6.5 L7.5,3.5 L10.5,6.5 Z" fill="#111"/><path d="M4.5,11.2 L7.5,14.2 L10.5,11.2 Z" fill="#111"/></svg>
<div class="t" style="left:582.09px;top:442.84px;font-size:12px;color:#000000;transform:scaleX(0.8810);">0 cm</div>
<div class="t" style="left:500.97px;top:466.44px;font-size:12px;color:#000000;transform:scaleX(1.0421);"><u>R</u>ight:</div>
<div class="r" style="left:579px;top:462px;width:59px;height:20px;background:#fff;border:1px solid #adadad;box-sizing:border-box"></div>
<div class="r" style="left:621px;top:463px;width:15px;height:9.0px;background:#ececec;border:1px solid #c9c9c9;box-sizing:border-box"></div>
<div class="r" style="left:621px;top:472.0px;width:15px;height:9.0px;background:#ececec;border:1px solid #c9c9c9;box-sizing:border-box"></div>
<svg class="s" style="left:621px;top:463px;" width="15" height="18" viewBox="0 0 15 18"><path d="M4.5,6.5 L7.5,3.5 L10.5,6.5 Z" fill="#111"/><path d="M4.5,11.2 L7.5,14.2 L10.5,11.2 Z" fill="#111"/></svg>
<div class="t" style="left:582.09px;top:466.84px;font-size:12px;color:#000000;transform:scaleX(0.8810);">0 cm</div>
<div class="t" style="left:679.79px;top:442.84px;font-size:12px;color:#000000;transform:scaleX(0.9281);"><u>S</u>pecial:</div>
<div class="r" style="left:680px;top:461px;width:126px;height:22px;background:#fff;border:1px solid #adadad;box-sizing:border-box"></div>
<div class="r" style="left:788px;top:461px;width:18px;height:22px;background:#e1e1e1;border:1px solid #adadad;box-sizing:border-box"></div>
<svg class="s" style="left:792px;top:468.0px;" width="11" height="8" viewBox="0 0 11 8"><path d="M1,2 L5.5,6.5 L10,2" fill="none" stroke="#555" stroke-width="1"/></svg>
<div class="t" style="left:683.49px;top:466.84px;font-size:12px;color:#000000;transform:scaleX(1.0246);">Hanging</div>
<div class="t" style="left:814.68px;top:442.84px;font-size:12px;color:#000000;transform:scaleX(0.8323);">B<u>y</u>:</div>
<div class="r" style="left:815px;top:462px;width:59px;height:20px;background:#fff;border:1px solid #adadad;box-sizing:border-box"></div>
<div class="r" style="left:857px;top:463px;width:15px;height:9.0px;background:#ececec;border:1px solid #c9c9c9;box-sizing:border-box"></div>
<div class="r" style="left:857px;top:472.0px;width:15px;height:9.0px;background:#ececec;border:1px solid #c9c9c9;box-sizing:border-box"></div>
<svg class="s" style="left:857px;top:463px;" width="15" height="18" viewBox="0 0 15 18"><path d="M4.5,6.5 L7.5,3.5 L10.5,6.5 Z" fill="#111"/><path d="M4.5,11.2 L7.5,14.2 L10.5,11.2 Z" fill="#111"/></svg>
<div class="t" style="left:817.67px;top:466.84px;font-size:12px;color:#000000;transform:scaleX(0.9095);">1 cm</div>
<div class="r" style="left:502px;top:492px;width:13px;height:13px;background:#fff;border:1px solid #333;box-sizing:border-box"></div>
<div class="t" style="left:518.31px;top:493.84px;font-size:12px;color:#000000;transform:scaleX(1.0106);"><u>M</u>irror indents</div>
<div class="r" style="left:483px;top:409px;width:398px;height:108px;border:4px solid #2b579a;border-radius:2px;box-sizing:border-box"></div>
<div class="t" style="left:492.48px;top:531.34px;font-size:12px;color:#000000;transform:scaleX(0.9632);">Spacing</div>
<div class="r" style="left:539.5px;top:535px;width:334.29999999999995px;height:1px;background:#dcdcdc"></div>
<div class="t" style="left:501.04px;top:554.14px;font-size:12px;color:#000000;transform:scaleX(0.9751);"><u>B</u>efore:</div>
<div class="r" style="left:579px;top:549px;width:59px;height:20px;background:#fff;border:1px solid #adadad;box-sizing:border-box"></div>
<div class="r" style="left:621px;top:550px;width:15px;height:9.0px;background:#ececec;border:1px solid #c9c9c9;box-sizing:border-box"></div>
<div class="r" style="left:621px;top:559.0px;width:15px;height:9.0px;background:#ececec;border:1px solid #c9c9c9;box-sizing:border-box"></div>
<svg class="s" style="left:621px;top:550px;" width="15" height="18" viewBox="0 0 15 18"><path d="M4.5,6.5 L7.5,3.5 L10.5,6.5 Z" fill="#111"/><path d="M4.5,11.2 L7.5,14.2 L10.5,11.2 Z" fill="#111"/></svg>
<div class="t" style="left:582.05px;top:553.84px;font-size:12px;color:#000000;transform:scaleX(0.9610);">0 pt</div>
<div class="t" style="left:501.98px;top:577.84px;font-size:12px;color:#000000;transform:scaleX(1.0088);">Af<u>t</u>er:</div>
<div class="r" style="left:579px;top:573px;width:59px;height:20px;background:#fff;border:1px solid #adadad;box-sizing:border-box"></div>
<div class="r" style="left:621px;top:574px;width:15px;height:9.0px;background:#ececec;border:1px solid #c9c9c9;box-sizing:border-box"></div>
<div class="r" style="left:621px;top:583.0px;width:15px;height:9.0px;background:#ececec;border:1px solid #c9c9c9;box-sizing:border-box"></div>
<svg class="s" style="left:621px;top:574px;" width="15" height="18" viewBox="0 0 15 18"><path d="M4.5,6.5 L7.5,3.5 L10.5,6.5 Z" fill="#111"/><path d="M4.5,11.2 L7.5,14.2 L10.5,11.2 Z" fill="#111"/></svg>
<div class="t" style="left:582.05px;top:577.84px;font-size:12px;color:#000000;transform:scaleX(0.9610);">0 pt</div>
<div class="t" style="left:679.05px;top:553.84px;font-size:12px;color:#000000;transform:scaleX(0.9674);">Li<u>n</u>e spacing:</div>
<div class="r" style="left:680px;top:572px;width:126px;height:22px;background:#fff;border:1px solid #adadad;box-sizing:border-box"></div>
<div class="r" style="left:788px;top:572px;width:18px;height:22px;background:#e1e1e1;border:1px solid #adadad;box-sizing:border-box"></div>
<svg class="s" style="left:792px;top:579.0px;" width="11" height="8" viewBox="0 0 11 8"><path d="M1,2 L5.5,6.5 L10,2" fill="none" stroke="#555" stroke-width="1"/></svg>
<div class="t" style="left:683.98px;top:577.84px;font-size:12px;color:#000000;transform:scaleX(0.9572);">Single</div>
<div class="t" style="left:814.98px;top:553.84px;font-size:12px;color:#000000;transform:scaleX(0.9814);"><u>A</u>t:</div>
<div class="r" style="left:815px;top:573px;width:59px;height:20px;background:#fff;border:1px solid #adadad;box-sizing:border-box"></div>
<div class="r" style="left:857px;top:574px;width:15px;height:9.0px;background:#ececec;border:1px solid #c9c9c9;box-sizing:border-box"></div>
<div class="r" style="left:857px;top:583.0px;width:15px;height:9.0px;background:#ececec;border:1px solid #c9c9c9;box-sizing:border-box"></div>
<svg class="s" style="left:857px;top:574px;" width="15" height="18" viewBox="0 0 15 18"><path d="M4.5,6.5 L7.5,3.5 L10.5,6.5 Z" fill="#111"/><path d="M4.5,11.2 L7.5,14.2 L10.5,11.2 Z" fill="#111"/></svg>
<div class="r" style="left:818px;top:577px;width:1px;height:12px;background:#000"></div>
<div class="r" style="left:502px;top:598px;width:13px;height:13px;background:#fff;border:1px solid #333;box-sizing:border-box"></div>
<div class="t" style="left:518.05px;top:600.04px;font-size:12px;color:#000000;transform:scaleX(0.9677);">Don't add spa<u>c</u>e between paragraphs of the same style</div>
<div class="t" style="left:492.09px;top:642.04px;font-size:12px;color:#000000;transform:scaleX(0.9275);">Preview</div>
<div class="r" style="left:537.7px;top:646.5px;width:336.0999999999999px;height:1px;background:#dcdcdc"></div>
<div class="r" style="left:502px;top:660px;width:372px;height:86px;border:1px solid #555;box-sizing:border-box;background:#fff;overflow:hidden">
<div class="t" style="left:24.40px;top:8.50px;font-size:6.5px;color:#c0c0c0;transform:scaleX(0.9627)">Previous Paragraph Previous Paragraph Previous Paragraph Previous Paragraph Previous Paragraph</div>
<div class="t" style="left:24.40px;top:18.20px;font-size:6.5px;color:#c0c0c0;transform:scaleX(0.9627)">Previous Paragraph Previous Paragraph Previous Paragraph Previous Paragraph Previous Paragraph</div>
<div class="t" style="left:24.50px;top:33.12px;font-size:6px;color:#333;transform:scaleX(0.8990)">1</div>
<div class="t" style="left:43.50px;top:33.12px;font-size:6px;color:#333;transform:scaleX(1.0488)">a</div>
<div class="t" style="left:24.40px;top:42.70px;font-size:6.5px;color:#c0c0c0;transform:scaleX(0.9931)">Following Paragraph Following Paragraph Following Paragraph Following Paragraph Following Paragraph</div>
<div class="t" style="left:24.40px;top:52.70px;font-size:6.5px;color:#c0c0c0;transform:scaleX(0.9931)">Following Paragraph Following Paragraph Following Paragraph Following Paragraph Following Paragraph</div>
<div class="t" style="left:24.40px;top:62.70px;font-size:6.5px;color:#c0c0c0;transform:scaleX(0.9931)">Following Paragraph Following Paragraph Following Paragraph Following Paragraph Following Paragraph</div>
<div class="t" style="left:24.40px;top:72.70px;font-size:6.5px;color:#c0c0c0;transform:scaleX(0.9931)">Following Paragraph Following Paragraph Following Paragraph Following Paragraph Following Paragraph</div>
<div class="t" style="left:24.40px;top:82.20px;font-size:6.5px;color:#c0c0c0;transform:scaleX(0.9931)">Following Paragraph Following Paragraph Following Paragraph Following Paragraph Following Paragraph</div>
</div>
<div class="r" style="left:484.4px;top:769px;width:73.60000000000002px;height:22px;background:#e1e1e1;border:1px solid #adadad;box-sizing:border-box"></div>
<div class="t" style="left:503.34px;top:774.64px;font-size:12px;color:#000000;transform:scaleX(0.9828);"><u>T</u>abs...</div>
<div class="r" style="left:597.3px;top:769px;width:88.40000000000009px;height:22px;background:#e1e1e1;border:1px solid #adadad;box-sizing:border-box"></div>
<div class="t" style="left:604.68px;top:774.64px;font-size:12px;color:#000000;transform:scaleX(0.9561);">Set As <u>D</u>efault</div>
<div class="r" style="left:724px;top:769px;width:73.60000000000002px;height:22px;background:#e1e1e1;border:2px solid #0078d7;box-sizing:border-box"></div>
<div class="t" style="left:752.99px;top:774.64px;font-size:12px;color:#000000;transform:scaleX(0.8957);">OK</div>
<div class="r" style="left:808px;top:769px;width:73.5px;height:22px;background:#e1e1e1;border:1px solid #adadad;box-sizing:border-box"></div>
<div class="t" style="left:827.74px;top:774.64px;font-size:12px;color:#000000;transform:scaleX(0.9265);">Cancel</div>
<div class="t" style="left:6.48px;top:844.44px;font-size:12px;color:#444;transform:scaleX(0.9296);">Page 1 of 1</div>
<div class="t" style="left:84.12px;top:843.84px;font-size:12px;color:#555;transform:scaleX(0.9616);">1 of 133 words</div>
<svg class="s" style="left:178px;top:843px;" width="16" height="14" viewBox="0 0 16 14"><g fill="none" stroke="#444" stroke-width="1.1"><path d="M1.5,11.5 V1.5 H5 C6.3,1.5 7.5,2.3 7.5,3.5 C7.5,2.3 8.7,1.5 10,1.5 H13.5 V6.5 M7.5,3.5 V12.5 M1.5,11.5 H5 C6.3,11.5 7.5,12 7.5,12.5"/><path d="M9,9.5 L11,12 L14.5,7.5"/></g></svg>
<div class="t" style="left:210.46px;top:843.84px;font-size:12px;color:#444;transform:scaleX(0.9521);">English (United States)</div>
<svg class="s" style="left:1239px;top:841px;" width="18" height="17" viewBox="0 0 18 17"><g fill="none" stroke="#444" stroke-width="1.1"><path d="M1.5,4 V1.5 H4 M14,1.5 H16.5 V4 M16.5,13 V15.5 H14 M4,15.5 H1.5 V13"/><path d="M5.5,3.5 H10 L12.5,6 V13.5 H5.5 Z M10,3.5 V6 H12.5"/></g></svg>
<div class="t" style="left:1257.07px;top:843.92px;font-size:12.5px;color:#444;transform:scaleX(0.9059);">Focus</div>
<svg class="s" style="left:1311px;top:842px;" width="17" height="14" viewBox="0 0 17 14"><g fill="none" stroke="#444" stroke-width="1.1"><path d="M1.5,2 H7 L8.5,3 L10,2 H15.5 V12.5 H10 L8.5,13 L7,12.5 H1.5 Z M8.5,3 V13"/><path d="M3.5,5 H6 M3.5,7.5 H6 M3.5,10 H6 M11,5 H13.5 M11,7.5 H13.5 M11,10 H13.5"/></g></svg>
<div class="r" style="left:1340px;top:838px;width:40px;height:22px;background:#c8c6c4"></div>
<svg class="s" style="left:1352px;top:842px;" width="15" height="15" viewBox="0 0 15 15"><g fill="none" stroke="#333" stroke-width="1.1"><rect x="2.5" y="1.5" width="10" height="12.5"/><path d="M4.5,4.5 H10.5 M4.5,7 H10.5 M4.5,9.5 H10.5 M4.5,12 H10.5"/></g></svg>
<svg class="s" style="left:1391px;top:841px;" width="18" height="17" viewBox="0 0 18 17"><g fill="none" stroke="#444" stroke-width="1.1"><path d="M9,14.5 H1.5 V1.5 H14.5 V8"/><path d="M4,4.5 H12 M4,7 H9 M4,9.5 H8"/><circle cx="13" cy="12.5" r="3.5" fill="#f3f2f1"/><path d="M9.5,12.5 H16.5 M13,9 V16"/></g></svg>
<div class="r" style="left:1426px;top:848px;width:8px;height:1px;background:#444"></div>
<div class="r" style="left:1439px;top:848px;width:100px;height:1px;background:#a6a6a6"></div>
<div class="r" style="left:1487px;top:843.5px;width:5px;height:11px;background:#666"></div>
<div class="r" style="left:1543px;top:848px;width:9px;height:1px;background:#444"></div>
<div class="r" style="left:1547px;top:844px;width:1px;height:9px;background:#444"></div>
<div class="t" style="left:1564.68px;top:844.34px;font-size:12px;color:#444;transform:scaleX(0.8961);">100%</div>
</body></html>
